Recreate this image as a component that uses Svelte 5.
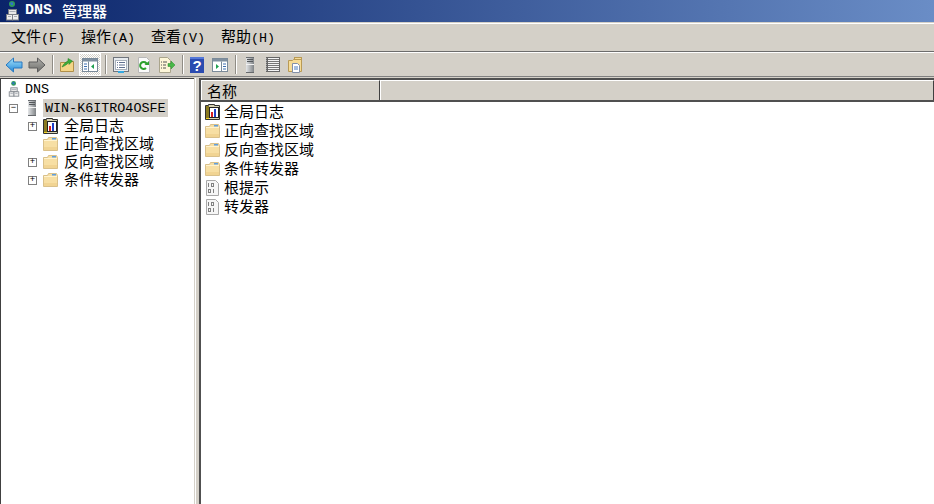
<script>
    const menus = [
        { label: '文件', key: '(F)' },
        { label: '操作', key: '(A)' },
        { label: '查看', key: '(V)' },
        { label: '帮助', key: '(H)' }
    ];

    const treeItems = [
        { label: '全局日志', icon: 'log', expand: true },
        { label: '正向查找区域', icon: 'folder', expand: false },
        { label: '反向查找区域', icon: 'folder', expand: true },
        { label: '条件转发器', icon: 'folder', expand: true }
    ];

    const listItems = [
        { label: '全局日志', icon: 'log' },
        { label: '正向查找区域', icon: 'folder' },
        { label: '反向查找区域', icon: 'folder' },
        { label: '条件转发器', icon: 'folder' },
        { label: '根提示', icon: 'binary' },
        { label: '转发器', icon: 'binary' }
    ];
</script>

{#snippet dnsIcon(width, height)}
    <svg {width} {height} viewBox="0 0 13 20">
        <circle cx="6" cy="3" r="3" fill="#2f9a5a" />
        <path d="M4 1.500h3v2.500H5z" fill="#2f6fd0" />
        <rect x="2.500" y="8.500" width="8" height="5" fill="#e8e8e8" stroke="#7b8088" />
        <rect x="3.500" y="10" width="6" height="1" fill="#a8adb5" />
        <rect x="0.500" y="13.500" width="6" height="5.500" fill="#eeeeee" stroke="#7b8088" />
        <rect x="6.500" y="13.500" width="6" height="5.500" fill="#eeeeee" stroke="#7b8088" />
        <rect x="2" y="15" width="3" height="1" fill="#a8adb5" />
        <rect x="8" y="15" width="3" height="1" fill="#a8adb5" />
    </svg>
{/snippet}

{#snippet serverIcon()}
    <svg width="16" height="16" viewBox="0 0 16 16">
        <defs>
            <linearGradient id="towerFill" x1="0" y1="0" x2="1" y2="0">
                <stop offset="0" stop-color="#e4e6e8" />
                <stop offset="1" stop-color="#7f8386" />
            </linearGradient>
        </defs>
        <rect x="4" y="0" width="8" height="16" fill="url(#towerFill)" />
        <rect x="4" y="0" width="8" height="1" fill="#6a6e72" />
        <rect x="5" y="2" width="6" height="1" fill="#55595c" />
        <rect x="5" y="4" width="6" height="1" fill="#55595c" />
        <rect x="4" y="7" width="8" height="1" fill="#f2f2f2" />
        <rect x="4" y="15" width="8" height="1" fill="#66696c" />
    </svg>
{/snippet}

{#snippet folderIcon()}
    <svg width="16" height="16" viewBox="0 0 16 16">
        <path d="M0.500 3.500h4l1-2h8l1 2v11h-14z" fill="#f7dfa4" stroke="#d9c08a" />
        <rect x="1" y="4" width="13" height="1" fill="#fff3cf" />
        <rect x="1" y="11" width="13" height="3" fill="#f1d493" />
        <rect x="9" y="2" width="4" height="1.500" fill="#5f9fe0" />
    </svg>
{/snippet}

{#snippet logIcon()}
    <svg width="16" height="16" viewBox="0 0 16 16">
        <path d="M0.500 1.500h3v-1h6v1h5v14h-14z" fill="#d8d2b4" stroke="#333" />
        <rect x="1" y="2" width="3" height="13" fill="#f2d21f" />
        <path d="M1 3h3M1 5h3M1 7h3M1 9h3M1 11h3M1 13h3" stroke="#222" />
        <rect x="4.500" y="3.500" width="9" height="10" fill="#fff" stroke="#222" />
        <rect x="6" y="8" width="2" height="5" fill="#d82020" />
        <rect x="9" y="5" width="2" height="8" fill="#2040c8" />
    </svg>
{/snippet}

{#snippet binaryIcon()}
    <svg width="16" height="16" viewBox="0 0 16 16">
        <path d="M1.500 0.500h9l3 3v12h-12z" fill="#f6f6f6" stroke="#a8a8a8" />
        <path d="M3 3h1v4H3zM6 3h3v4H6zM3 9h3v4H3zM8 9h1v4H8z" fill="#808080" />
        <path d="M7 4h1v2H7zM4 10h1v2H4z" fill="#f6f6f6" />
    </svg>
{/snippet}

{#snippet itemIcon(name)}
    {#if name === 'log'}
        {@render logIcon()}
    {:else if name === 'folder'}
        {@render folderIcon()}
    {:else}
        {@render binaryIcon()}
    {/if}
{/snippet}

<div class="window">
    <header class="titlebar">
        <span class="title-icon">{@render dnsIcon(13, 20)}</span>
        <span class="title-latin">DNS</span>
        <span class="title-cjk">管理器</span>
    </header>

    <nav class="menubar">
        {#each menus as menu}
            <span class="menu-item">{menu.label}<span class="latin">{menu.key}</span></span>
        {/each}
    </nav>

    <div class="toolbar">
        <span class="tool wide">
            <svg width="18" height="16" viewBox="0 0 18 16">
                <defs>
                    <linearGradient id="backFill" x1="0" y1="0" x2="0" y2="1">
                        <stop offset="0" stop-color="#a8e4fb" />
                        <stop offset="1" stop-color="#1f86d8" />
                    </linearGradient>
                </defs>
                <path d="M8.500 1L1 8l7.500 7v-4H17V5H8.500z" fill="url(#backFill)" stroke="#2a79c0" />
            </svg>
        </span>
        <span class="tool wide">
            <svg width="18" height="16" viewBox="0 0 18 16">
                <defs>
                    <linearGradient id="forwardFill" x1="0" y1="0" x2="0" y2="1">
                        <stop offset="0" stop-color="#b0b0ac" />
                        <stop offset="1" stop-color="#6e6e6a" />
                    </linearGradient>
                </defs>
                <path d="M9.500 1L17 8l-7.500 7v-4H1V5h8.500z" fill="url(#forwardFill)" stroke="#5c5c5c" />
            </svg>
        </span>
        <span class="sep"></span>
        <span class="tool">
            <svg width="16" height="16" viewBox="0 0 16 16">
                <path d="M1.500 5.500h6l1-1h6v10h-13z" fill="#f4d587" stroke="#b08f48" />
                <path d="M3 10c2-4 4-5 6-6V1.500L13.500 4 10 7.500V5.500C8 7 6 9 3 10z" fill="#3cad3c" stroke="#1f7a1f" stroke-width="0.500" />
            </svg>
        </span>
        <span class="tool pressed">
            <svg width="16" height="14" viewBox="0 0 16 14">
                <rect x="0.500" y="0.500" width="15" height="13" fill="#fff" stroke="#7a8a99" />
                <rect x="1" y="1" width="14" height="2.500" fill="#7f8f9f" />
                <path d="M6.500 3.500v10" stroke="#7a8a99" />
                <path d="M2 6h3M2 8.500h3M2 11h3" stroke="#3d6fb0" />
                <path d="M12 6v5L9 8.500z" fill="#20a050" />
            </svg>
        </span>
        <span class="sep"></span>
        <span class="tool wide">
            <svg width="16" height="16" viewBox="0 0 16 16">
                <rect x="0.500" y="0.500" width="15" height="14" fill="#e6eaee" stroke="#6f747c" />
                <rect x="2.500" y="3.500" width="11" height="9" fill="#fff" stroke="#a8b0bb" />
                <path d="M4 5.500h1M6 5.500h6M4 8h1M6 8h6M4 10.500h1M6 10.500h6" stroke="#5f6f90" />
                <rect x="5" y="14" width="6" height="2" fill="#35a8e0" />
            </svg>
        </span>
        <span class="tool wide">
            <svg width="16" height="16" viewBox="0 0 16 16">
                <path d="M2.500 0.500h8l3 3v12h-11z" fill="#fafafa" stroke="#b8b8b8" />
                <path d="M11 7.500a3.500 3.500 0 1 0-1 3.500" fill="none" stroke="#2ea02e" stroke-width="2" />
                <path d="M8.500 8H13V4z" fill="#2ea02e" />
            </svg>
        </span>
        <span class="tool wide">
            <svg width="17" height="16" viewBox="0 0 17 16">
                <path d="M1.500 0.500h8l3 3v12h-11z" fill="#fdf6d8" stroke="#aaa58c" />
                <path d="M3 5h1M5 5h4M3 8h1M5 8h3M3 11h1M5 11h3" stroke="#555" />
                <path d="M10 6.500h3V4l4 4-4 4V9.500h-3z" fill="#48b848" stroke="#2a8a2a" stroke-width="0.500" />
            </svg>
        </span>
        <span class="sep"></span>
        <span class="tool">
            <svg width="14" height="16" viewBox="0 0 14 16">
                <rect x="0" y="0" width="14" height="16" fill="#2b4bb0" />
                <rect x="0" y="0" width="14" height="2" fill="#5578d8" />
                <text x="7" y="13.500" text-anchor="middle" class="help-mark">?</text>
            </svg>
        </span>
        <span class="tool wide">
            <svg width="16" height="14" viewBox="0 0 16 14">
                <rect x="0.500" y="0.500" width="15" height="13" fill="#fff" stroke="#7a8a99" />
                <rect x="1" y="1" width="14" height="2.500" fill="#7f8f9f" />
                <path d="M9.500 3.500v10" stroke="#7a8a99" />
                <path d="M11 6h3M11 8.500h3M11 11h3" stroke="#3d6fb0" />
                <path d="M4 6v5l3-2.500z" fill="#20a050" />
            </svg>
        </span>
        <span class="sep"></span>
        <span class="tool">{@render serverIcon()}</span>
        <span class="tool wide">
            <svg width="15" height="15" viewBox="0 0 15 15">
                <rect x="1" y="0" width="14" height="15" fill="#666" />
                <rect x="3" y="1" width="11" height="13" fill="#f4f4f4" />
                <path d="M3 2.500h11M3 4.500h11M3 6.500h11M3 8.500h11M3 10.500h11M3 12.500h11" stroke="#777" />
                <path d="M1 1v13" stroke="#ddd" stroke-dasharray="1 1" />
            </svg>
        </span>
        <span class="tool">
            <svg width="15" height="16" viewBox="0 0 15 16">
                <path d="M0.500 3.500h4l1-1h8v12h-13z" fill="#f6dc96" stroke="#b99a55" />
                <rect x="6.500" y="0.500" width="7" height="2" fill="#f6dc96" stroke="#b99a55" />
                <path d="M4.500 6.500h5l2 2v7h-7z" fill="#fff" stroke="#8290a8" />
                <path d="M6 10h4M6 12h4" stroke="#4d7fc0" />
            </svg>
        </span>
    </div>

    <main class="panes">
        <aside class="tree-pane">
            <div class="tree-row level-0">
                <span class="dns-icon">{@render dnsIcon(12, 16)}</span>
                <span class="latin tree-label root-label">DNS</span>
            </div>
            <div class="tree-row level-1">
                <span class="expander">−</span>
                <span class="node-icon">{@render serverIcon()}</span>
                <span class="latin tree-label selected">WIN-K6ITRO4OSFE</span>
            </div>
            {#each treeItems as item}
                <div class="tree-row level-2">
                    {#if item.expand}
                        <span class="expander">+</span>
                    {:else}
                        <span class="expander none"></span>
                    {/if}
                    <span class="node-icon">{@render itemIcon(item.icon)}</span>
                    <span class="tree-label cjk-label">{item.label}</span>
                </div>
            {/each}
        </aside>

        <span class="splitter"></span>

        <section class="list-pane">
            <div class="list-header">
                <span class="column first">名称</span>
                <span class="column rest"></span>
            </div>
            <div class="list-body">
                {#each listItems as item}
                    <div class="list-row">
                        <span class="node-icon">{@render itemIcon(item.icon)}</span>
                        <span class="cjk-label">{item.label}</span>
                    </div>
                {/each}
            </div>
        </section>
    </main>
</div>

<style>
    :global(body) {
        margin: 0;
        background: #d4d0c8;
    }

    .window {
        width: 934px;
        height: 504px;
        display: flex;
        flex-direction: column;
        overflow: hidden;
        font-family: "Noto Sans CJK SC", "Liberation Mono", monospace;
        font-size: 15px;
        line-height: 18px;
        color: #000;
    }

    .latin {
        font-family: "Liberation Mono", monospace;
        font-size: 13.4px;
    }

    .titlebar {
        height: 22px;
        flex: none;
        display: flex;
        align-items: center;
        padding-left: 6px;
        box-sizing: border-box;
        background: linear-gradient(90deg, #0a246a, #6a8dc6);
        color: #fff;
        font-weight: 700;
    }

    .title-icon {
        display: flex;
        width: 19px;
    }

    .title-latin {
        font-family: "Liberation Mono", monospace;
        font-size: 15px;
    }

    .title-cjk {
        margin-left: 10px;
        font-weight: 500;
    }

    .menubar {
        height: 29px;
        flex: none;
        box-sizing: border-box;
        margin-top: 1px;
        padding-left: 11px;
        display: flex;
        align-items: center;
        border-top: 1px solid #fff;
        border-bottom: 1px solid #6d6d6d;
        background: #d4d0c8;
    }

    .menu-item {
        width: 70px;
    }

    .toolbar {
        height: 25px;
        flex: none;
        box-sizing: border-box;
        padding-left: 2px;
        display: flex;
        align-items: center;
        border-top: 1px solid #fff;
        border-bottom: 1px solid #808080;
        background: #d4d0c8;
    }

    .tool {
        width: 22px;
        height: 21px;
        display: flex;
        align-items: center;
        justify-content: center;
        flex: none;
    }

    .tool.wide {
        width: 23px;
    }

    .tool.pressed {
        margin-left: 1px;
        height: 23px;
        border: 1px solid #fff;
        box-sizing: border-box;
        background: repeating-conic-gradient(#fff 0 25%, #d4d0c8 0 50%) 0 0 / 2px 2px;
    }

    .sep {
        width: 1px;
        height: 19px;
        margin: 0 2px 0 4px;
        background: #8f8c85;
        border-right: 1px solid #fff;
        flex: none;
    }

    .help-mark {
        font-family: "Liberation Sans", sans-serif;
        font-size: 15px;
        font-weight: 700;
        fill: #fff;
    }

    .panes {
        flex: 1;
        min-height: 0;
        margin-top: 1px;
        display: flex;
    }

    .tree-pane {
        width: 194px;
        box-sizing: border-box;
        flex: none;
        background: #fff;
        border-top: 1px solid #404040;
        border-left: 1px solid #404040;
    }

    .splitter {
        width: 5px;
        flex: none;
        box-sizing: border-box;
        border-left: 1px solid #d4d0c8;
        box-shadow: inset 1px 0 0 #fff;
    }

    .tree-row {
        height: 18px;
        display: flex;
        align-items: center;
    }

    .tree-row.level-0 {
        height: 20px;
        padding-left: 7px;
    }

    .tree-row.level-1 {
        padding-left: 8px;
    }

    .tree-row.level-2 {
        padding-left: 27px;
    }

    .expander {
        width: 9px;
        height: 9px;
        box-sizing: border-box;
        border: 1px solid #808080;
        flex: none;
        margin-right: 6px;
        display: flex;
        align-items: center;
        justify-content: center;
        font-family: "Liberation Mono", monospace;
        font-size: 9px;
        line-height: 7px;
    }

    .expander.none {
        border: 0;
    }

    .node-icon {
        width: 16px;
        height: 16px;
        display: flex;
        flex: none;
    }

    .dns-icon {
        display: flex;
        flex: none;
    }

    .tree-label {
        margin-left: 4px;
        padding: 0 1px;
        white-space: nowrap;
    }

    .root-label {
        margin-top: 2px;
    }

    .cjk-label {
        margin-bottom: 2px;
    }

    .tree-label.selected {
        margin-left: 3px;
        padding: 0 2px;
        background: #d4d0c8;
        height: 18px;
        line-height: 20px;
    }

    .list-pane {
        flex: 1;
        min-width: 0;
        display: flex;
        flex-direction: column;
        background: #fff;
        border-left: 2px solid #505050;
        border-top: 2px solid #505050;
    }

    .list-header {
        height: 22px;
        flex: none;
        display: flex;
        box-sizing: border-box;
        background: #d4d0c8;
        border-bottom: 2px solid #505050;
    }

    .column {
        height: 20px;
        box-sizing: border-box;
        border-top: 1px solid #fff;
        border-left: 1px solid #fff;
        border-right: 1px solid #404040;
        padding: 1px 0 0 5px;
    }

    .column.first {
        width: 179px;
        flex: none;
    }

    .column.rest {
        flex: 1;
    }

    .list-body {
        padding-left: 4px;
    }

    .list-row {
        height: 19px;
        display: flex;
        align-items: center;
        gap: 3px;
        white-space: nowrap;
    }
</style>
